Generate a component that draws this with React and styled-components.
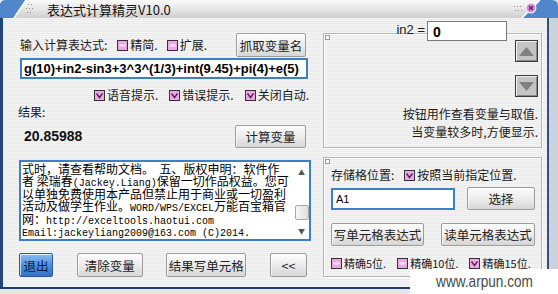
import styled, { createGlobalStyle } from "styled-components";

const GlobalStyle = createGlobalStyle`
  html, body {
    margin: 0;
    padding: 0;
    overflow: hidden;
    background: #f0f0f0;
  }
  * {
    box-sizing: border-box;
  }
`;

const UI_FONT = `"Noto Sans CJK SC", "Noto Sans", sans-serif`;

const Window = styled.div`
  position: relative;
  width: 558px;
  height: 294px;
  display: flex;
  flex-direction: column;
  overflow: hidden;
  font-family: ${UI_FONT};
  font-size: 12px;
  color: #1a1a1a;
  background: #e9e9e9;
`;

const TitleBar = styled.div`
  position: relative;
  height: 18px;
  flex: none;
  display: flex;
  align-items: center;
  padding-left: 45px;
  background: linear-gradient(#fafafa, #e4e4e4 55%, #cfcfcf);
  border-left: 2px solid #2a4c80;
  border-top-left-radius: 6px;
  border-top-right-radius: 6px;
  font-size: 13px;
  color: #111;

  .corner {
    position: absolute;
    top: 0;
  }
`;

const Body = styled.div`
  height: 269px;
  flex: none;
  display: flex;
  gap: 12px;
  padding-left: 15px;
  border-left: 3px solid #22467c;
  border-right: 9px solid #c9d3de;
  box-shadow: inset -2px 0 0 #30507e;
  background: repeating-linear-gradient(
    #f4f4f4 0px,
    #f4f4f4 1px,
    #ebebeb 1px,
    #ebebeb 2px
  );
`;

const BottomEdge = styled.div`
  height: 7px;
  flex: none;
  border-top: 2px solid #1f3e6c;
  background: #e6e6e6;
`;

const LeftPane = styled.div`
  width: 293px;
  flex: none;
  display: flex;
  flex-direction: column;
  padding-top: 15px;
`;

const Row = styled.div`
  display: flex;
  align-items: center;
  gap: ${({ gap }) => gap || 8}px;
  padding: ${({ pad }) => pad || "0"};
  margin-top: ${({ top }) => top || 0}px;
  justify-content: ${({ justify }) => justify || "flex-start"};
  height: ${({ h }) => (h ? `${h}px` : "auto")};
  font-size: ${({ fs }) => fs || 12}px;
`;

const Label = styled.span`
  white-space: nowrap;
  line-height: 14px;
  margin-right: ${({ mr }) => mr || 0}px;
`;

const Button = styled.div`
  width: ${({ w }) => w}px;
  height: ${({ h }) => h || 24}px;
  flex: none;
  display: flex;
  align-items: center;
  justify-content: center;
  margin-left: ${({ auto }) => (auto ? "auto" : "0")};
  border: 1px solid ${({ primary }) => (primary ? "#2a5a9e" : "#9c9c9c")};
  border-radius: 2px;
  background: ${({ primary }) =>
    primary
      ? "linear-gradient(#8cc0f2, #4c8ee0 50%, #2f72c8)"
      : "linear-gradient(#fdfdfd, #ececec 50%, #d6d6d6)"};
  box-shadow: inset 1px 1px 0 rgba(255, 255, 255, 0.7);
  font-size: 12.5px;
  color: ${({ primary }) => (primary ? "#0c1c40" : "#222")};
  white-space: nowrap;
`;

const ExprInput = styled.div`
  height: 21px;
  margin: 1px 3px 0 2px;
  padding: 0 2px;
  display: flex;
  align-items: center;
  border: 2px solid #3d7fc4;
  background: #fff;
  overflow: hidden;
  white-space: nowrap;
  font-family: "Liberation Sans", Arial, sans-serif;
  font-weight: bold;
  font-size: 13px;
  color: #000;
`;

const CheckItem = styled.span`
  display: inline-flex;
  align-items: center;
  gap: 2px;
  white-space: nowrap;
  line-height: 14px;
`;

const ResultValue = styled.span`
  font-family: "Liberation Sans", Arial, sans-serif;
  font-weight: bold;
  font-size: 14px;
  padding-left: 6px;
  color: #111;
`;

const Memo = styled.div`
  position: relative;
  height: 81px;
  margin: 13px 0 0 1px;
  border: 2px solid #3d7fc4;
  background: #fff;
  display: flex;
  overflow: hidden;
`;

const MemoText = styled.div`
  flex: 1;
  padding: 1px 0 0 1px;
  font-size: 12px;
  color: #000;
  overflow: hidden;
`;

const MemoLine = styled.div`
  height: 12.4px;
  line-height: 12.4px;
  white-space: pre;
`;

const Mono = styled.span`
  font-family: "Liberation Mono", "Courier New", monospace;
  font-size: 10px;
  line-height: 10px;
`;

const ScrollBar = styled.div`
  width: 15px;
  flex: none;
  display: flex;
  flex-direction: column;
  align-items: center;
  padding: 6px 0 4px;
  background: #fff;
  color: #555;
  font-size: 7px;
  line-height: 8px;

  .thumb {
    width: 14px;
    height: 15px;
    margin: 29px 0 auto;
    border: 1px solid #a8a8a8;
    border-radius: 2px;
    background: linear-gradient(90deg, #f6f6f6, #dedede);
  }
`;

const ButtonBar = styled.div`
  display: flex;
  justify-content: space-between;
  margin: 12px 4px 0 1px;
`;

const RightPane = styled.div`
  width: 219px;
  flex: none;
  display: flex;
  flex-direction: column;
  padding-top: 3px;
`;

const VarRow = styled.div`
  position: relative;
  z-index: 1;
  height: 12px;
  display: flex;
  align-items: flex-start;
  justify-content: flex-end;
  gap: 2px;
  padding-right: 35px;
  font-family: "Liberation Sans", Arial, sans-serif;
  font-size: 13px;

  span {
    line-height: 14px;
    margin-top: 2px;
  }
`;

const VarInput = styled.div`
  width: 80px;
  height: 20px;
  flex: none;
  padding: 1px 5px;
  border: 1px solid #7a7a7a;
  background: #fff;
  font-weight: bold;
  font-size: 14px;
  line-height: 18px;
  color: #000;
`;

const GroupBox = styled.div`
  position: relative;
  height: ${({ h }) => h}px;
  margin-top: ${({ top }) => top || 0}px;
  border: 1px solid #b4b4b4;
  box-shadow: inset 1px 1px 0 #ffffff, 1px 1px 0 #ffffff;
  display: flex;
  flex-direction: column;
  padding: ${({ pad }) => pad};

  &::before {
    content: "";
    position: absolute;
    left: 1px;
    top: 1px;
    width: 3px;
    height: 3px;
    border: 1px solid #999;
    background: #fff;
  }
`;

const ArrowButton = styled.div`
  width: 23px;
  height: 22px;
  align-self: flex-end;
  margin-top: ${({ top }) => top}px;
  display: flex;
  align-items: center;
  justify-content: center;
  border: 1px solid #3a3a3a;
  box-shadow: inset 1px 1px 0 #f2f2f2, inset -1px -1px 0 #8a8a8a;
  background: #c4c4c4;
`;

const HintText = styled.div`
  margin-top: auto;
  text-align: right;
  line-height: 18px;
  padding-bottom: 6px;
`;

const CellInput = styled.div`
  width: 124px;
  height: 22px;
  padding: 0 3px;
  display: flex;
  align-items: center;
  border: 2px solid #3d7fc4;
  background: #fff;
  font-family: "Liberation Sans", Arial, sans-serif;
  font-size: 11px;
  color: #000;
`;

const Watermark = styled.div`
  position: absolute;
  right: 0;
  bottom: 0;
  width: 148px;
  height: 25px;
  display: flex;
  align-items: center;
  justify-content: center;
  background: #fff;
  font-family: "Liberation Sans", Arial, sans-serif;
  font-size: 17px;
  color: #4a4a4a;

  span {
    display: inline-block;
    transform: scaleX(0.8);
  }
`;

const Check = ({ checked }) => (
  <svg width="11" height="11" viewBox="0 0 11 11">
    <rect x="0.5" y="0.5" width="10" height="10" fill="#eaa8e4" stroke="#333" />
    {checked ? (
      <path d="M2.5 3.5 L5.5 7.5 L8.5 3.5" stroke="#5a205a" strokeWidth="1.4" fill="none" />
    ) : (
      <ellipse cx="5.5" cy="5.5" rx="3.5" ry="1.4" fill="#f6d8f2" />
    )}
  </svg>
);

const CheckBox = ({ checked, children }) => (
  <CheckItem>
    <Check checked={checked} />
    {children}
  </CheckItem>
);

const memoLines = [
  "式时，请查看帮助文档。  五、版权申明：软件作",
  "者 梁瑞春(Jackey.Liang)保留一切作品权益。您可",
  "以单独免费使用本产品但禁止用于商业或一切盈利",
  "活动及做学生作业。WORD/WPS/EXCEL万能百宝箱官",
  "网：http://exceltools.haotui.com",
  "Email:jackeyliang2009@163.com (C)2014.",
];

const renderLine = (line) =>
  line.split(/([\x21-\x7e][\x20-\x7e]*)/).map((part, i) =>
    /[\x21-\x7e]/.test(part) ? <Mono key={i}>{part}</Mono> : part
  );

const Triangle = ({ down }) => (
  <svg width="15" height="9" viewBox="0 0 15 9">
    <path d={down ? "M0 0 H15 L7.5 9 Z" : "M7.5 0 L15 9 H0 Z"} fill="#808080" />
  </svg>
);

export default function App() {
  return (
    <>
      <GlobalStyle />
      <Window>
        <TitleBar>
          <svg className="corner" style={{ left: -2 }} width="40" height="18" viewBox="0 0 40 18">
            <path d="M0 6 Q0 0 6 0 H26 L14 18 H0 Z" fill="#4f86cc" />
            <path d="M26 0 L14 18" stroke="#ffffff" strokeWidth="1.5" />
            <g fill="#8a8a8a">
              <rect x="28" y="4" width="1" height="1" />
              <rect x="31" y="4" width="1" height="1" />
              <rect x="26" y="8" width="1" height="1" />
              <rect x="29" y="8" width="1" height="1" />
              <rect x="32" y="8" width="1" height="1" />
              <rect x="27" y="12" width="1" height="1" />
              <rect x="30" y="12" width="1" height="1" />
            </g>
          </svg>
          表达式计算精灵V10.0
          <svg className="corner" style={{ right: 0 }} width="48" height="18" viewBox="0 0 48 18">
            <g fill="#8a8a8a">
              <rect x="4" y="6" width="1" height="1" />
              <rect x="7" y="6" width="1" height="1" />
              <rect x="10" y="6" width="1" height="1" />
              <rect x="5" y="10" width="1" height="1" />
              <rect x="8" y="10" width="1" height="1" />
              <rect x="11" y="10" width="1" height="1" />
            </g>
            <path d="M12 18 L30 0 H42 Q48 0 48 6 V18 Z" fill="#4f86cc" />
            <path d="M12 18 L30 0" stroke="#ffffff" strokeWidth="1.5" />
            <circle cx="21" cy="8" r="5.5" fill="#f4e4f4" />
            <circle cx="21" cy="8" r="4.3" fill="#d58ad8" />
            <path d="M19 6 L23 10 M23 6 L19 10" stroke="#5a205a" strokeWidth="1.2" />
          </svg>
        </TitleBar>
        <Body>
          <LeftPane>
            <Row h={24} gap={9} pad="0 5px 0 2px">
              <Label mr={1}>输入计算表达式:</Label>
              <CheckBox>精简.</CheckBox>
              <CheckBox>扩展.</CheckBox>
              <Button w={70} auto>抓取变量名</Button>
            </Row>
            <ExprInput>g(10)+in2-sin3+3^3^(1/3)+int(9.45)+pi(4)+e(5)</ExprInput>
            <Row top={9} h={14} gap={11} justify="flex-end" pad="0 2px 0 0">
              <CheckBox checked>语音提示.</CheckBox>
              <CheckBox checked>错误提示.</CheckBox>
              <CheckBox checked>关闭自动.</CheckBox>
            </Row>
            <Row top={3} h={14}>
              <Label>结果:</Label>
            </Row>
            <Row top={6} h={22} pad="0 5px 0 0">
              <ResultValue>20.85988</ResultValue>
              <Button w={71} h={23} auto>计算变量</Button>
            </Row>
            <Memo>
              <MemoText>
                {memoLines.map((line, i) => (
                  <MemoLine key={i}>{renderLine(line)}</MemoLine>
                ))}
              </MemoText>
              <ScrollBar>
                <span>▲</span>
                <div className="thumb" />
                <span>▼</span>
              </ScrollBar>
            </Memo>
            <ButtonBar>
              <Button w={34} primary>退出</Button>
              <Button w={66}>清除变量</Button>
              <Button w={80}>结果写单元格</Button>
              <Button w={37}>&lt;&lt;</Button>
            </ButtonBar>
          </LeftPane>
          <RightPane>
            <VarRow>
              <span>in2 =</span>
              <VarInput>0</VarInput>
            </VarRow>
            <GroupBox h={115} pad="0 3px 0 0">
              <ArrowButton top={6}>
                <Triangle />
              </ArrowButton>
              <ArrowButton top={13}>
                <Triangle down />
              </ArrowButton>
              <HintText>
                <div>按钮用作查看变量与取值.</div>
                <div>当变量较多时,方便显示.</div>
              </HintText>
            </GroupBox>
            <GroupBox h={120} top={9} pad="9px 6px 0 7px">
              <Row h={16} gap={10}>
                <Label>存储格位置:</Label>
                <CheckBox checked>按照当前指定位置.</CheckBox>
              </Row>
              <Row top={4} h={23} justify="space-between">
                <CellInput>A1</CellInput>
                <Button w={68} h={23}>选择</Button>
              </Row>
              <Row top={13} h={23} justify="space-between">
                <Button w={93} h={23}>写单元格表达式</Button>
                <Button w={94} h={23}>读单元格表达式</Button>
              </Row>
              <Row top={10} h={14} gap={11} fs={11}>
                <CheckBox>精确5位.</CheckBox>
                <CheckBox>精确10位.</CheckBox>
                <CheckBox checked>精确15位.</CheckBox>
              </Row>
            </GroupBox>
          </RightPane>
        </Body>
        <BottomEdge />
        <Watermark>
          <span>www.arpun.com</span>
        </Watermark>
      </Window>
    </>
  );
}
